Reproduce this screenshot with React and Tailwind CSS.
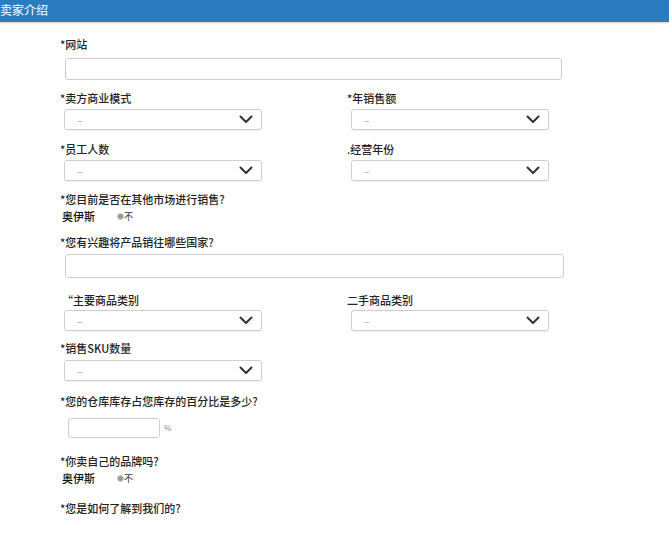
const F = { fontFamily: '"Noto Sans CJK SC","Liberation Sans",sans-serif' };

function Chevron() {
  return (
    <svg width="14" height="9" viewBox="0 0 14 9" className="shrink-0">
      <path d="M1.5 1.5 L7 7 L12.5 1.5" fill="none" stroke="#333" strokeWidth="2" strokeLinecap="round" strokeLinejoin="round" />
    </svg>
  );
}

function Select({ w = "w-[198px]" }) {
  return (
    <div className={`${w} h-[21px] border border-[#cfcfcf] rounded-[3px] bg-white flex items-center justify-between pl-3 pr-2 shadow-[0_1px_1px_rgba(0,0,0,0.06)]`}>
      <span className="text-[10px] text-[#999] leading-[10px]">–</span>
      <Chevron />
    </div>
  );
}

function Label({ children, className = "" }) {
  return <div className={`text-[11px] font-medium text-[#222] leading-[13px] ${className}`}>{children}</div>;
}

function Toggle() {
  return (
    <div className="flex items-center gap-[22px] mt-[4px] ml-[2px] leading-[13px]">
      <span className="text-[11px] font-medium text-[#111]">奥伊斯</span>
      <span className="flex items-center">
        <span className="w-[7px] h-[7px] rounded-full bg-[#999] border border-[#ccc]"></span>
        <span className="text-[9px] text-[#333]">不</span>
      </span>
    </div>
  );
}

export default function App() {
  return (
    <div style={F} className="w-[669px] h-[533px] overflow-hidden bg-white">
      <div className="h-[22px] bg-[#2b7cbf] text-white text-[12px] leading-[20px] shadow-[0_1px_2px_rgba(0,0,0,0.2)]">卖家介绍</div>
      <div className="pl-[60px] pt-[16px]">
        <Label>*网站</Label>
        <div className="ml-[5px] mt-[7px] w-[497px] h-[22px] border border-[#cfcfcf] rounded-[3px]"></div>

        <div className="grid grid-cols-[287px_1fr] mt-[12px]">
          <div>
            <Label>*卖方商业模式</Label>
            <div className="ml-[4px] mt-[4px]"><Select /></div>
            <Label className="mt-[13px]">*员工人数</Label>
            <div className="ml-[4px] mt-[4px]"><Select /></div>
          </div>
          <div>
            <Label>*年销售额</Label>
            <div className="ml-[4px] mt-[4px]"><Select /></div>
            <Label className="mt-[13px]">.经营年份</Label>
            <div className="ml-[4px] mt-[4px]"><Select /></div>
          </div>
        </div>

        <Label className="mt-[12px]">*您目前是否在其他市场进行销售?</Label>
        <Toggle />

        <Label className="mt-[13px]">*您有兴趣将产品销往哪些国家?</Label>
        <div className="ml-[5px] mt-[5px] w-[499px] h-[24px] border border-[#cfcfcf] rounded-[3px]"></div>

        <div className="grid grid-cols-[287px_1fr] mt-[16px]">
          <div>
            <Label className="ml-[2px]">“主要商品类别</Label>
            <div className="ml-[4px] mt-[3px]"><Select /></div>
          </div>
          <div>
            <Label>二手商品类别</Label>
            <div className="ml-[4px] mt-[3px]"><Select /></div>
          </div>
        </div>

        <Label className="mt-[11px]">*销售SKU数量</Label>
        <div className="ml-[4px] mt-[5px]"><Select /></div>

        <Label className="mt-[14px]">*您的仓库库存占您库存的百分比是多少?</Label>
        <div className="flex items-center mt-[10px] ml-[8px] gap-[4px]">
          <div className="w-[92px] h-[20px] border border-[#cfcfcf] rounded-[3px]"></div>
          <span className="text-[8px] text-[#888]">%</span>
        </div>

        <Label className="mt-[17px]">*你卖自己的品牌吗?</Label>
        <Toggle />

        <Label className="mt-[17px]">*您是如何了解到我们的?</Label>
      </div>
    </div>
  );
}
